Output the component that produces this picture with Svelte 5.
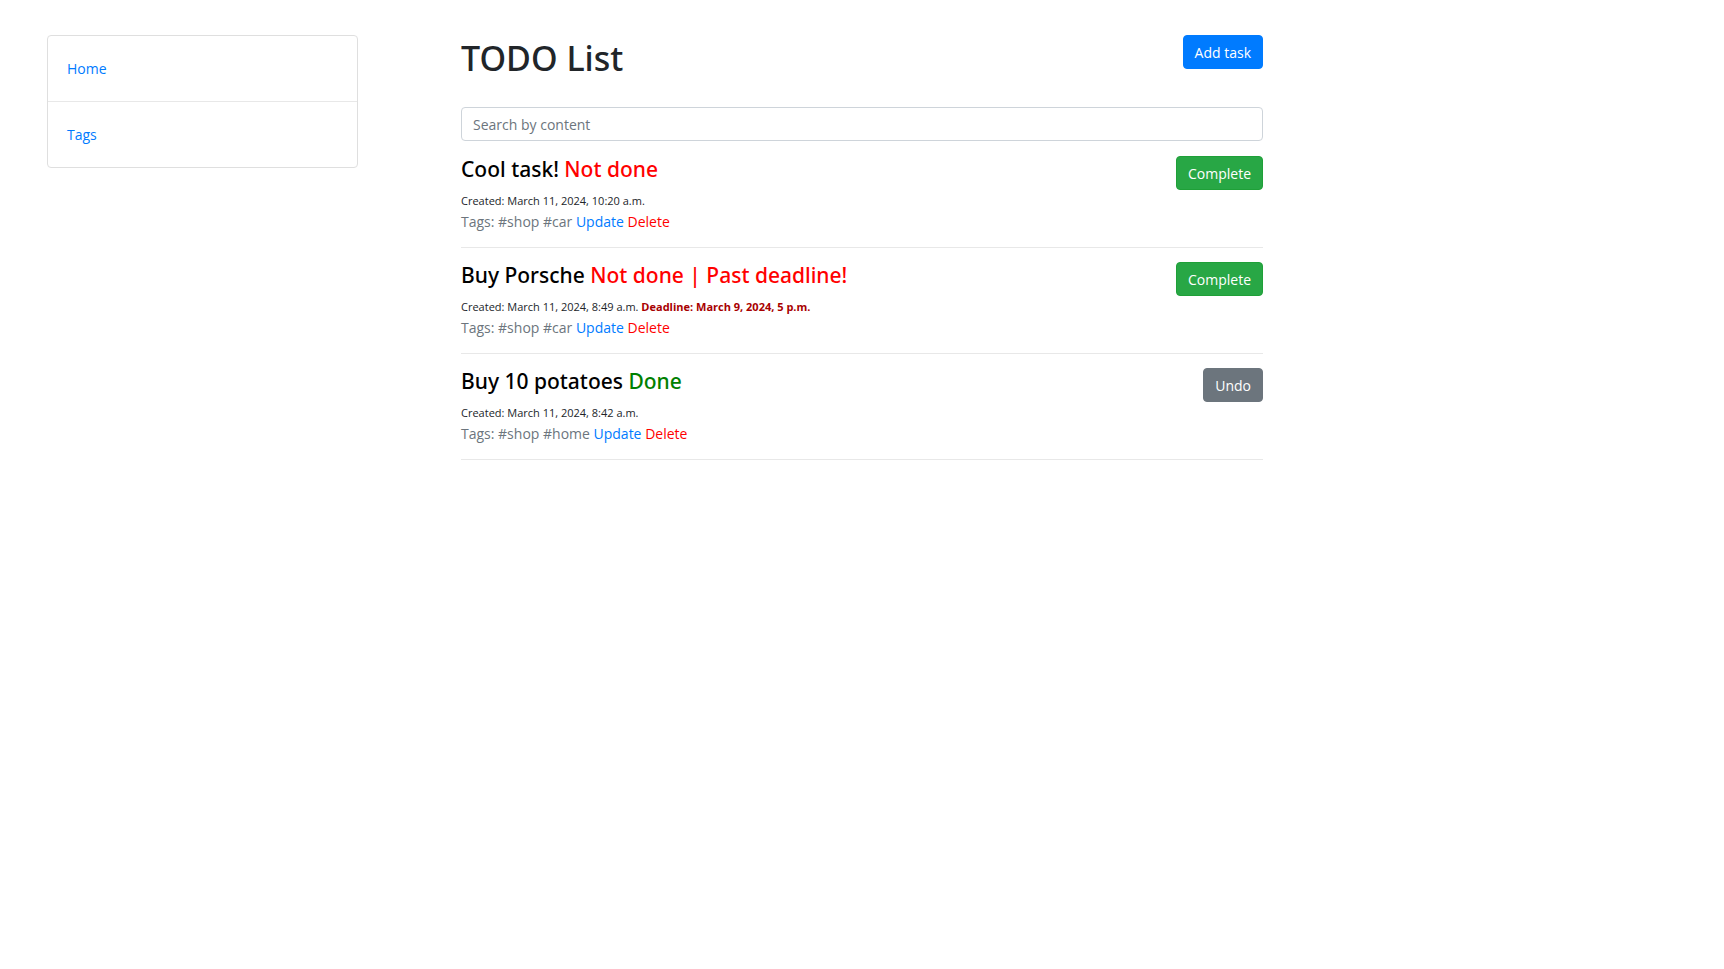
<script>
  let query = $state('');

  let tasks = $state([
    { id: 3, title: 'Cool task!', created: 'March 11, 2024, 10:20 a.m.', deadline: null, done: false, tags: ['shop', 'car'] },
    { id: 2, title: 'Buy Porsche', created: 'March 11, 2024, 8:49 a.m.', deadline: 'March 9, 2024, 5 p.m.', done: false, tags: ['shop', 'car'] },
    { id: 1, title: 'Buy 10 potatoes', created: 'March 11, 2024, 8:42 a.m.', deadline: null, done: true, tags: ['shop', 'home'] }
  ]);

  const visible = $derived(tasks.filter((t) => t.title.toLowerCase().includes(query.toLowerCase())));

  function statusText(task) {
    if (task.done) return 'Done';
    return task.deadline ? 'Not done | Past deadline!' : 'Not done';
  }
</script>

<div class="layout">
  <nav class="sidebar">
    <ul>
      <li><a href="#home">Home</a></li>
      <li><a href="#tags">Tags</a></li>
    </ul>
  </nav>

  <main>
    <header>
      <h1>TODO List</h1>
      <button type="button" class="btn primary">Add task</button>
    </header>

    <input class="search" type="search" placeholder="Search by content" aria-label="Search by content" bind:value={query} />

    {#each visible as task (task.id)}
      <article>
        <div class="details">
          <h2>{task.title} <span class={task.done ? 'done' : 'pending'}>{statusText(task)}</span></h2>
          <p class="dates">
            Created: {task.created}
            {#if task.deadline}<strong>Deadline: {task.deadline}</strong>{/if}
          </p>
          <p class="meta">
            Tags: {task.tags.map((t) => '#' + t).join(' ')}
            <a href="#update-{task.id}">Update</a>
            <a class="delete" href="#delete-{task.id}">Delete</a>
          </p>
        </div>
        <button type="button" class="btn {task.done ? 'secondary' : 'success'}" onclick={() => (task.done = !task.done)}>
          {task.done ? 'Undo' : 'Complete'}
        </button>
      </article>
    {/each}
  </main>
</div>

<style>
  :global(body) {
    background: #fff;
    color: #212529;
    font-family: 'Segoe UI', 'Open Sans', 'Noto Sans', sans-serif;
    font-size: 14px;
    line-height: 22px;
  }

  .layout {
    display: grid;
    grid-template-columns: 1fr 2fr 1fr;
    padding-top: 35px;
  }

  .sidebar {
    padding: 0 73px 0 47px;
  }

  ul {
    margin: 0;
    padding: 0;
    list-style: none;
    border: 1px solid #dfdfdf;
    border-radius: 4px;
  }

  li {
    padding: 22px 19px 21px;
  }

  li + li {
    border-top: 1px solid #e8e8e8;
  }

  a {
    color: #007bff;
    text-decoration: none;
  }

  a:hover {
    text-decoration: underline;
  }

  main {
    min-width: 0;
    padding: 0 30px;
  }

  header {
    display: flex;
    justify-content: space-between;
    align-items: flex-start;
    margin-bottom: 26px;
  }

  h1,
  h2 {
    font-family: 'Segoe UI', 'Noto Sans', 'Open Sans', sans-serif;
    font-weight: 500;
  }

  h1 {
    margin: 0;
    font-size: 34px;
    line-height: 46px;
  }

  .btn {
    flex: none;
    box-sizing: border-box;
    height: 34px;
    padding: 2px 11px 0;
    border: 1px solid transparent;
    border-radius: 4px;
    color: #fff;
    font: inherit;
    cursor: pointer;
  }

  .primary {
    background: #007bff;
    border-color: #007bff;
  }

  .success {
    background: #28a745;
    border-color: #1fa038;
  }

  .secondary {
    background: #6c757d;
    border-color: #6c757d;
  }

  .search {
    display: block;
    box-sizing: border-box;
    width: 100%;
    height: 34px;
    margin: 0 0 15px;
    padding: 0 11px;
    border: 1px solid #ced4da;
    border-radius: 4px;
    background: #fff;
    color: #495057;
    font: inherit;
    appearance: none;
  }

  .search::placeholder {
    color: #6c757d;
    opacity: 1;
  }

  article {
    display: flex;
    justify-content: space-between;
    align-items: flex-start;
    margin-bottom: 14px;
    padding-bottom: 14px;
    border-bottom: 1px solid #e8e8e8;
  }

  h2 {
    margin: 0 0 8px;
    color: #000;
    font-size: 21px;
    line-height: 26px;
  }

  p {
    margin: 0;
  }

  .dates {
    font-size: 11px;
    line-height: 21px;
  }

  .meta {
    color: #6c757d;
  }

  .pending,
  .delete {
    color: #f00;
  }

  .done {
    color: #008000;
  }

  strong {
    color: #a80000;
    font-weight: 700;
  }
</style>
